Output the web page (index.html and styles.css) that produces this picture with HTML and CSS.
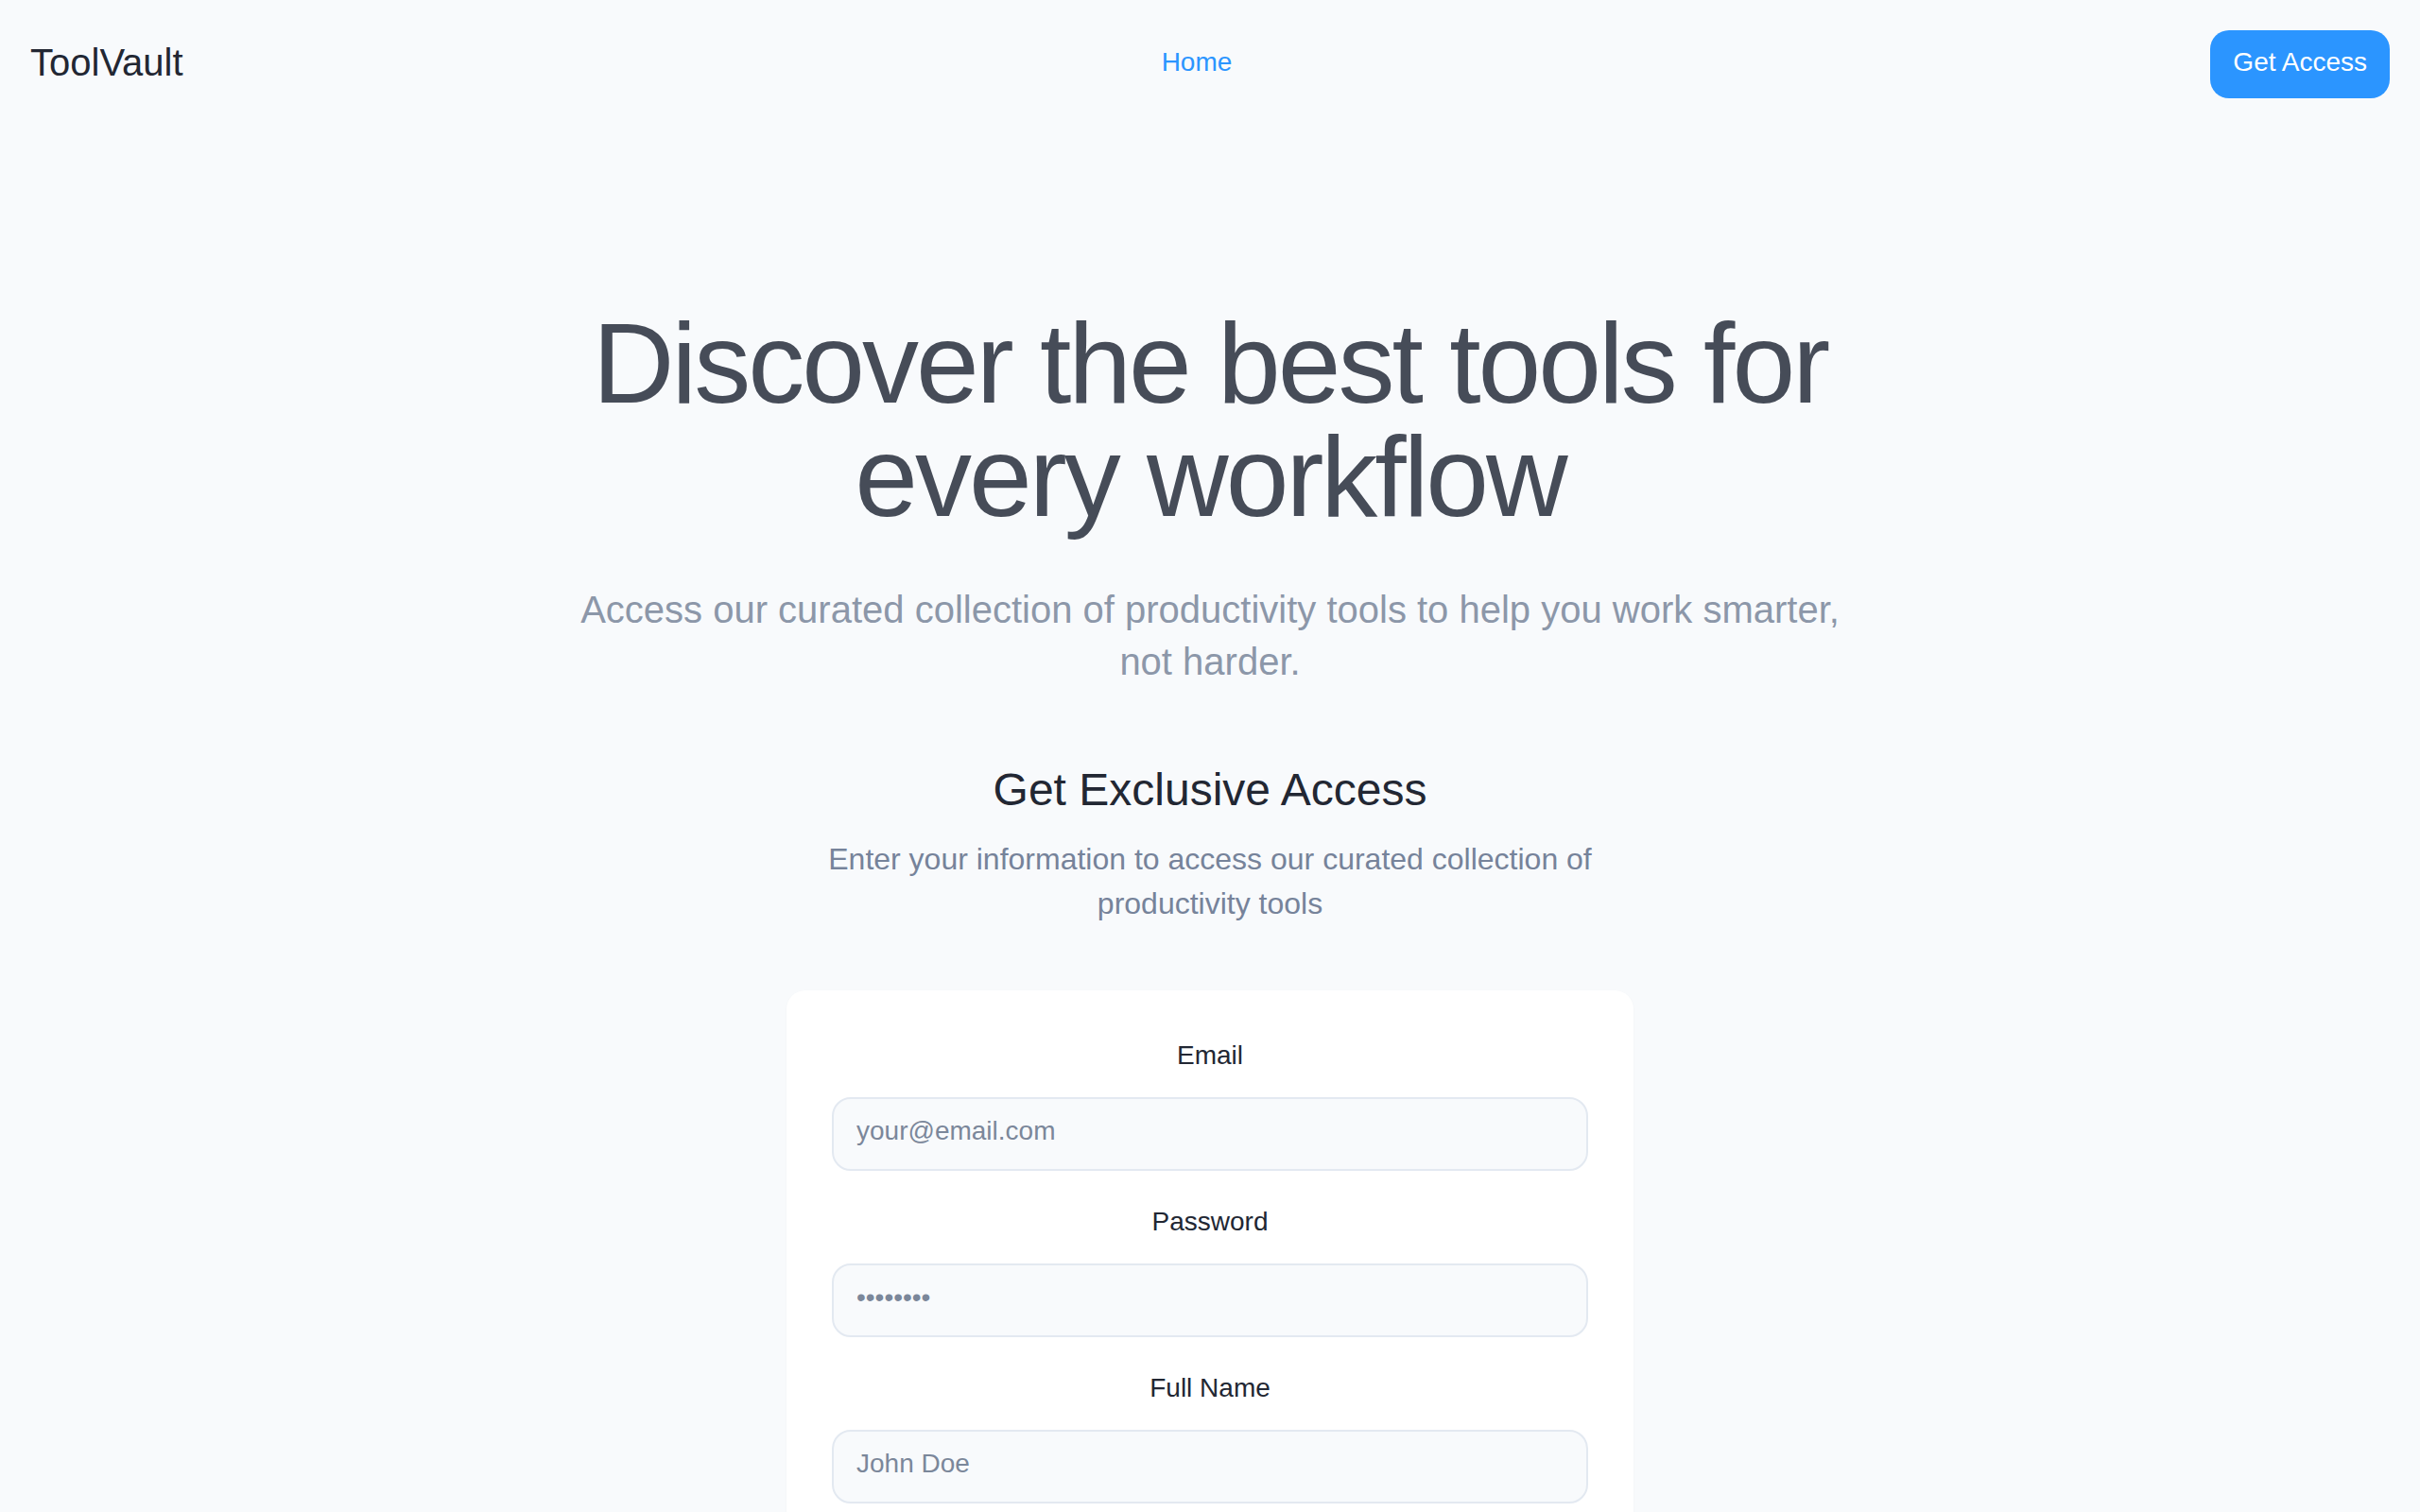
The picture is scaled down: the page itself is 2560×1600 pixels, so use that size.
FILE: index.html
```html
<!DOCTYPE html>
<html lang="en">
<head>
    <meta charset="UTF-8">
    <meta name="viewport" content="width=device-width, initial-scale=1.0">
    <title>ToolVault</title>
    <link rel="stylesheet" href="styles.css">
</head>
<body>
    <header class="navbar">
        <a href="#" class="logo">ToolVault</a>
        <nav class="nav-links">
            <a href="#" class="nav-link active">Home</a>
        </nav>
        <a href="#access" class="btn-access">Get Access</a>
    </header>

    <main class="hero">
        <h1 class="hero-title">Discover the best tools for every workflow</h1>
        <p class="hero-subtitle">Access our curated collection of productivity tools to help you work smarter, not harder.</p>

        <section class="access" id="access">
            <h2 class="access-title">Get Exclusive Access</h2>
            <p class="access-text">Enter your information to access our curated collection of productivity tools</p>

            <form class="access-card" onsubmit="return false;">
                <div class="field">
                    <label for="email">Email</label>
                    <input type="email" id="email" placeholder="your@email.com">
                </div>
                <div class="field">
                    <label for="password">Password</label>
                    <input type="password" id="password" placeholder="••••••••">
                </div>
                <div class="field">
                    <label for="name">Full Name</label>
                    <input type="text" id="name" placeholder="John Doe">
                </div>
                <button type="submit" class="btn-submit">Get Access</button>
            </form>
        </section>
    </main>
</body>
</html>
```

FILE: styles.css
```css
body {
    font-family: "Liberation Sans", Arial, sans-serif;
    background-color: #f8fafc;
    color: #222733;
    margin: 0;
}

a {
    text-decoration: none;
}

.navbar {
    display: flex;
    justify-content: space-between;
    align-items: center;
    padding: 32px;
}

.logo {
    font-size: 40px;
    line-height: 56px;
    padding-bottom: 4px;
    color: #222733;
}

.nav-links {
    padding-bottom: 4px;
}

.nav-link {
    font-size: 28px;
    color: #2b95ff;
}

.btn-access {
    background-color: #2b95ff;
    color: white;
    font-size: 28px;
    line-height: 40px;
    padding: 14px 24px 18px;
    border-radius: 20px;
}

.hero {
    display: flex;
    flex-direction: column;
    align-items: center;
    text-align: center;
    padding: 188px 32px 120px;
}

.hero-title {
    max-width: 1360px;
    margin: 0;
    font-size: 120px;
    line-height: 120px;
    font-weight: 400;
    letter-spacing: -0.025em;
    color: #464c58;
}

.hero-subtitle {
    max-width: 1360px;
    margin: 54px 0 0;
    font-size: 40px;
    line-height: 55px;
    color: #8c97a9;
}

.access {
    width: 896px;
    margin-top: 78px;
}

.access-title {
    margin: 0;
    font-size: 48px;
    line-height: 60px;
    font-weight: 400;
    color: #222733;
}

.access-text {
    margin: 20px 0 68px;
    font-size: 32px;
    line-height: 47px;
    color: #76839a;
}

.access-card {
    display: flex;
    flex-direction: column;
    gap: 33px;
    background-color: #fff;
    border-radius: 20px;
    padding: 48px;
    box-shadow: 0 1px 3px rgba(15, 23, 42, 0.03);
}

.field label {
    display: block;
    font-size: 28px;
    line-height: 42px;
    margin-bottom: 23px;
    color: #222733;
}

.field input {
    box-sizing: border-box;
    width: 100%;
    padding: 13px 24px 19px;
    border: 2px solid #e3e9f1;
    border-radius: 20px;
    background-color: #f8fafc;
    font-family: inherit;
    font-size: 28px;
    line-height: 42px;
    color: #222733;
    outline: none;
}

.field input::placeholder {
    color: #7b879a;
}

.btn-submit {
    border: none;
    border-radius: 20px;
    padding: 18px;
    background-color: #2b95ff;
    color: white;
    font-family: inherit;
    font-size: 28px;
    cursor: pointer;
}
```
